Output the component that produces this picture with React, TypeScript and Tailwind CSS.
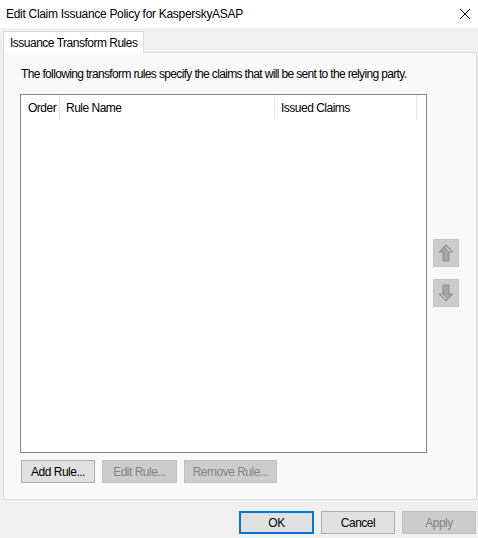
import React from 'react';

const font = { fontFamily: '"Liberation Sans", Arial, sans-serif' };

const ArrowButton: React.FC<{ dir: 'up' | 'down' }> = ({ dir }) => (
  <div className="w-[26px] h-[28px] bg-[#cccccc] border border-[#c4c4c4] flex items-center justify-center">
    <svg width="16" height="18" viewBox="0 0 16 18" className={dir === 'down' ? 'rotate-180' : ''}>
      <path d="M8 1 L15 8 L11 8 L11 17 L5 17 L5 8 L1 8 Z" fill="#a6a6a6" stroke="#8c8c8c" strokeWidth="1" />
      <path d="M8 3 L12.5 7.5" stroke="#e2e2e2" strokeWidth="1" />
    </svg>
  </div>
);

const Btn: React.FC<{ label: string; w: string; disabled?: boolean; primary?: boolean }> = ({ label, w, disabled, primary }) => (
  <div
    className={`${w} h-[23px] flex items-center justify-center text-[12px] ${
      disabled
        ? 'bg-[#cccccc] border border-[#bfbfbf] text-[#838383]'
        : primary
        ? 'bg-[#e1e1e1] border-2 border-[#0078d7] text-black'
        : 'bg-[#e1e1e1] border border-[#adadad] text-black'
    }`}
  >
    {label}
  </div>
);

export default function App() {
  return (
    <div className="w-[478px] h-[538px] bg-[#f0f0f0] flex flex-col overflow-hidden tracking-[-0.5px]" style={font}>
      <div className="h-[28px] bg-white flex items-center justify-between pl-[6px] pr-[6px] shrink-0">
        <span className="text-[12px] text-black tracking-[-0.3px]">Edit Claim Issuance Policy for KasperskyASAP</span>
        <svg width="12" height="12" viewBox="0 0 12 12" className="mr-[1px]">
          <path d="M1 1 L11 11 M11 1 L1 11" stroke="#000" strokeWidth="1" />
        </svg>
      </div>

      <div className="pl-[3px] pt-[3px] flex flex-col">
        <div className="flex -mb-[1px] relative z-10">
          <div className="h-[22px] bg-white border border-[#d9d9d9] border-b-0 px-[6px] flex items-center text-[12px] text-black">
            Issuance Transform Rules
          </div>
        </div>
        <div className="w-[474px] h-[448px] bg-[#f9f9f9] border border-[#d9d9d9] pl-[16px] pt-[13px] flex flex-col">
          <p className="text-[12px] text-black leading-[16px] ml-[1px] tracking-[-0.65px]">
            The following transform rules specify the claims that will be sent to the relying party.
          </p>
          <div className="flex mt-[12px]">
            <div className="w-[407px] h-[359px] bg-white border border-[#828790]">
              <div className="flex h-[25px] items-center text-[12px] text-black">
                <div className="w-[39px] pl-[7px] h-full flex items-center border-r border-[#e5e5e5]">Order</div>
                <div className="w-[215px] pl-[6px] h-full flex items-center border-r border-[#e5e5e5]">Rule Name</div>
                <div className="w-[142px] pl-[6px] h-full flex items-center border-r border-[#e5e5e5]">Issued Claims</div>
              </div>
            </div>
            <div className="ml-[6px] flex flex-col gap-[12px] pt-[145px]">
              <ArrowButton dir="up" />
              <ArrowButton dir="down" />
            </div>
          </div>
          <div className="flex gap-[7px] mt-[7px] ml-[1px]">
            <Btn label="Add Rule..." w="w-[74px]" />
            <Btn label="Edit Rule..." w="w-[75px]" disabled />
            <Btn label="Remove Rule..." w="w-[93px]" disabled />
          </div>
        </div>
      </div>

      <div className="flex justify-end gap-[7px] pr-[2px] mt-[11px]">
        <Btn label="OK" w="w-[75px]" primary />
        <Btn label="Cancel" w="w-[74px]" />
        <Btn label="Apply" w="w-[74px]" disabled />
      </div>
    </div>
  );
}
